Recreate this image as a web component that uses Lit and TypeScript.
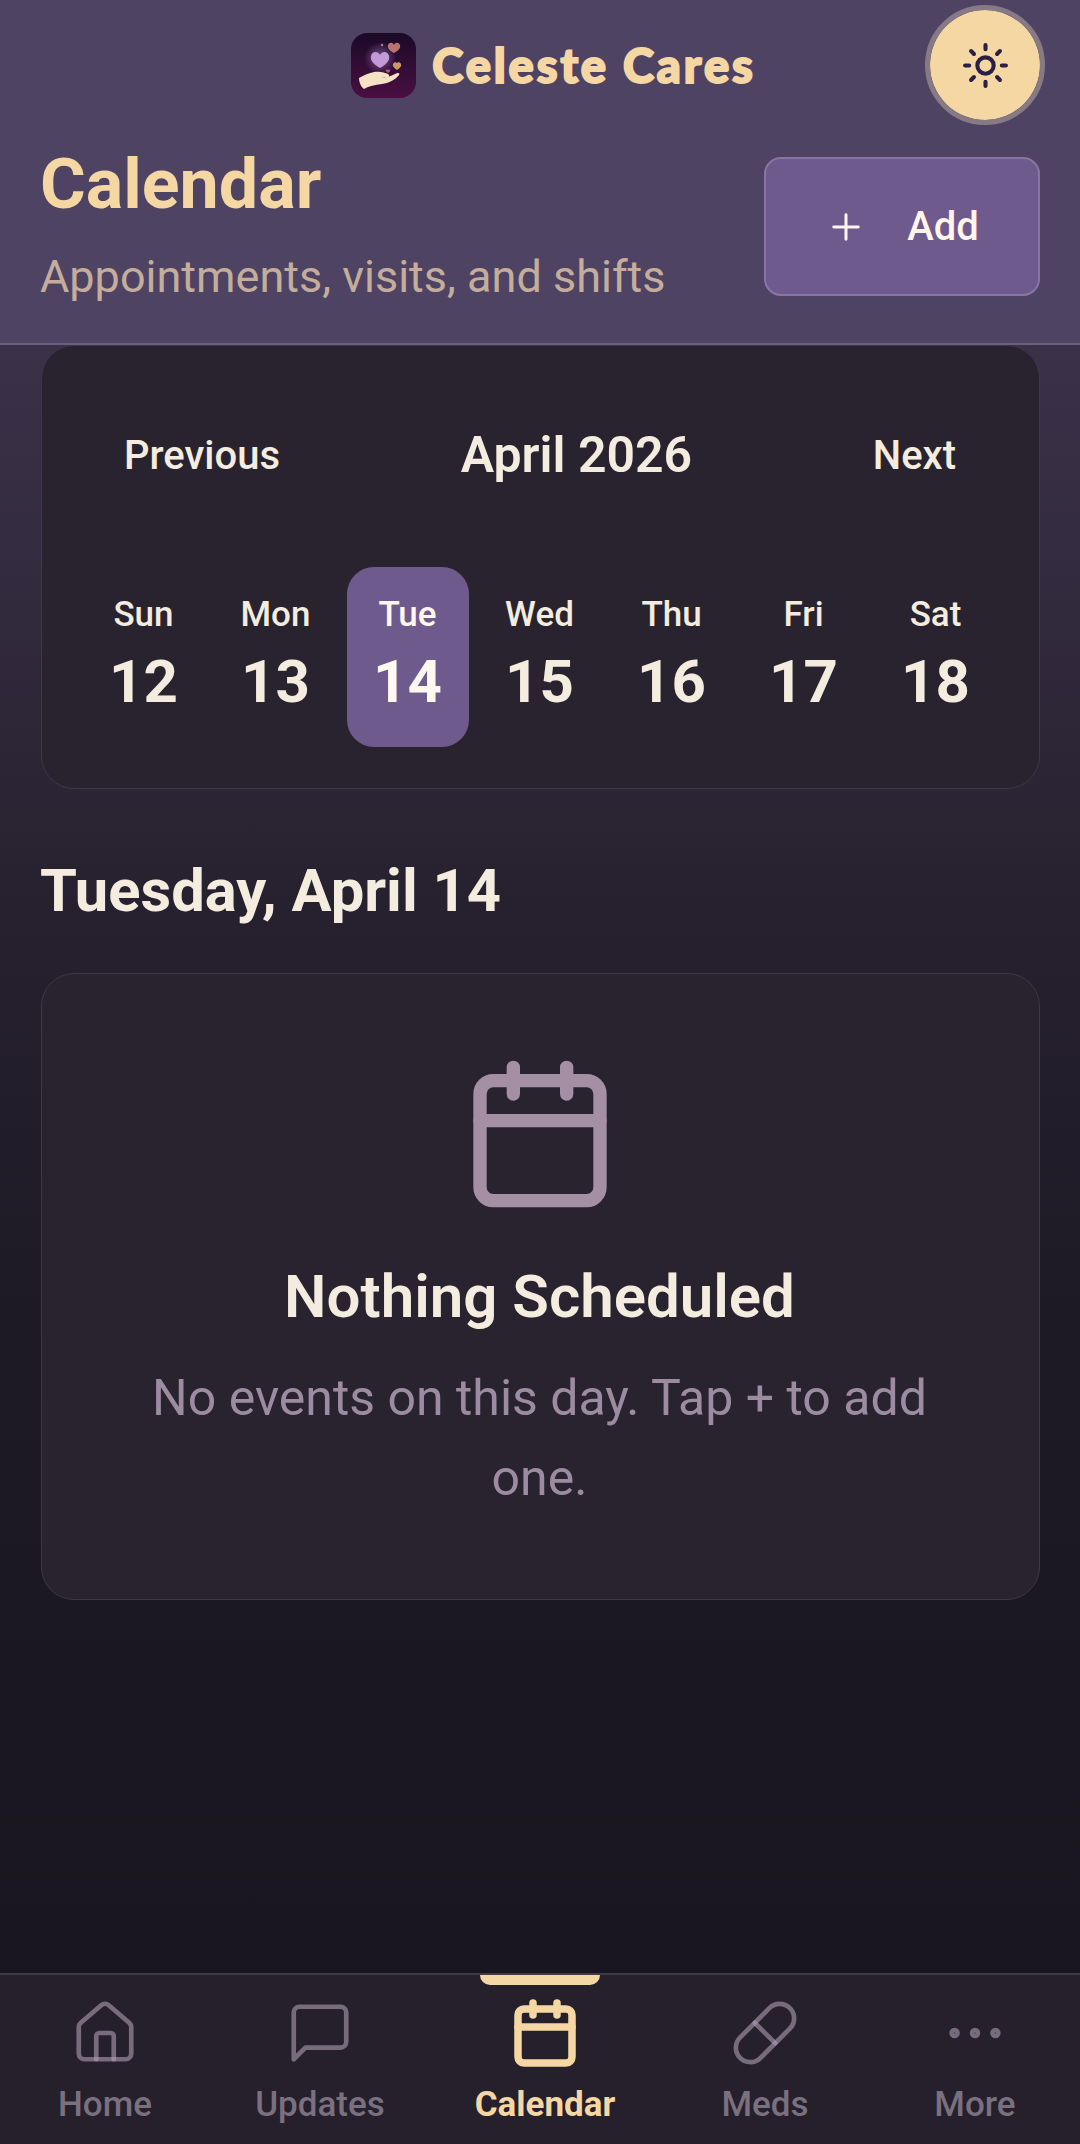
import { LitElement, html, css, svg } from "lit";
import { customElement } from "lit/decorators.js";

const days = [
  ["Sun", "12"], ["Mon", "13"], ["Tue", "14"], ["Wed", "15"], ["Thu", "16"], ["Fri", "17"], ["Sat", "18"],
];

const calIcon = svg`<rect x="3" y="4" width="18" height="18" rx="2"/><path d="M16 2v4M8 2v4M3 10h18"/>`;

const navItems = [
  { label: "Home", icon: svg`<path d="M15 21v-8a1 1 0 0 0-1-1h-4a1 1 0 0 0-1 1v8"/><path d="M3 10a2 2 0 0 1 .71-1.53l7-6a2 2 0 0 1 2.58 0l7 6A2 2 0 0 1 21 10v9a2 2 0 0 1-2 2H5a2 2 0 0 1-2-2z"/>` },
  { label: "Updates", icon: svg`<path d="M21 15a2 2 0 0 1-2 2H7l-4 4V5a2 2 0 0 1 2-2h14a2 2 0 0 1 2 2z"/>` },
  { label: "Calendar", icon: calIcon, active: true },
  { label: "Meds", icon: svg`<path d="m10.5 20.5 10-10a4.95 4.95 0 1 0-7-7l-10 10a4.95 4.95 0 1 0 7 7Z"/><path d="m8.5 8.5 7 7"/>` },
  { label: "More", icon: svg`<circle cx="12" cy="12" r="1"/><circle cx="19" cy="12" r="1"/><circle cx="5" cy="12" r="1"/>` },
];

@customElement("app-root")
export class AppRoot extends LitElement {
  static styles = css`
    :host {
      display: flex;
      flex-direction: column;
      height: 2144px;
      width: 1080px;
      overflow: hidden;
      font-family: Roboto, "Liberation Sans", sans-serif;
      color: #f3ecdf;
      background: linear-gradient(180deg, #4f4363 0%, #3a3148 17%, #27212f 42%, #1d1925 62%, #19151f 100%);
    }
    svg { display: block; }
    .head {
      flex: none;
      height: 345px;
      box-sizing: border-box;
      background: #4f4363;
      border-bottom: 2px solid #6a5f7c;
      display: flex;
      flex-direction: column;
    }
    .brandrow {
      height: 130px;
      flex: none;
      position: relative;
      display: flex;
      align-items: center;
      justify-content: center;
      gap: 16px;
      padding-left: 27px;
      box-sizing: border-box;
    }
    .logo { border-radius: 16px; }
    .brand {
      font-family: Lato, sans-serif;
      font-weight: 900;
      font-size: 47px;
      letter-spacing: 2.9px;
      color: #f5d7a3;
      line-height: 1;
      -webkit-text-stroke: 2px #f5d7a3;
      stroke-linejoin: round;
    }
    .theme {
      position: absolute;
      left: 925px;
      top: 5px;
      width: 120px;
      height: 120px;
      box-sizing: border-box;
      border-radius: 50%;
      background: #f5d7a3;
      border: 5px solid #877a84;
      background-clip: padding-box;
      display: flex;
      align-items: center;
      justify-content: center;
    }
    .titlerow {
      display: flex;
      justify-content: space-between;
      padding: 19px 40px 0 40px;
    }
    h1 {
      margin: 0;
      font-size: 70px;
      line-height: 70px;
      font-weight: 700;
      color: #f5d7a3;
    }
    .sub {
      margin-top: 32px;
      font-size: 45px;
      line-height: 52px;
      color: #c4ae9b;
    }
    .add {
      width: 276px;
      height: 139px;
      box-sizing: border-box;
      margin-top: 8px;
      background: #6f5a8e;
      border: 2px solid #8875a5;
      border-radius: 17px;
      display: flex;
      align-items: center;
      justify-content: center;
      gap: 40px;
      font-size: 40px;
      font-weight: 500;
      color: #fff5ea;
    }
    main {
      flex: 1;
      padding: 0 40px 0 41px;
      min-height: 0;
    }
    .card {
      background: #292330;
      border: 1.5px solid #3d3746;
      border-radius: 33px;
      box-sizing: border-box;
    }
    .calcard {
      height: 444px;
      padding: 0 40px 0 40.5px;
    }
    .month {
      display: flex;
      align-items: center;
      justify-content: space-between;
      height: 218px;
      padding: 0 0 0 41.5px;
      font-size: 40px;
      font-weight: 500;
    }
    .month b { font-size: 50px; font-weight: 600; }
    .month span:last-child { margin-right: 43px; }
    .week {
      display: grid;
      grid-template-columns: repeat(7, 122px);
      column-gap: 10px;
      margin-top: 3px;
    }
    .day {
      height: 180px;
      border-radius: 27px;
      display: flex;
      flex-direction: column;
      align-items: center;
      box-sizing: border-box;
      padding-top: 28px;
    }
    .day.sel { background: #6f5a8e; color: #fff8ef; }
    .dn { font-size: 35px; line-height: 39px; font-weight: 500; }
    .dd { font-size: 60px; line-height: 72px; font-weight: 700; margin-top: 12px; }
    h2 {
      margin: 0 0 0 -1px;
      padding-top: 67px;
      font-size: 59.7px;
      line-height: 70px;
      font-weight: 700;
    }
    .empty {
      margin-top: 47px;
      height: 627px;
      display: flex;
      flex-direction: column;
      align-items: center;
      padding: 80px 2px 0 0;
      text-align: center;
    }
    .empty h3 {
      margin: 48px 0 0;
      font-size: 60px;
      line-height: 70px;
      font-weight: 600;
    }
    .empty p {
      margin: 26px 0 0;
      width: 800px;
      font-size: 50px;
      line-height: 80px;
      color: #9d8ca1;
    }
    nav {
      flex: none;
      height: 171px;
      box-sizing: border-box;
      background: #25202b;
      border-top: 2px solid #3f3a48;
      display: grid;
      grid-template-columns: 210px 220px 230px 210px 210px;
    }
    .item {
      position: relative;
      display: flex;
      flex-direction: column;
      align-items: center;
      padding-top: 23px;
      color: #7b7080;
      font-size: 35px;
      font-weight: 500;
      line-height: 40px;
    }
    .item svg { width: 70px; height: 70px; stroke: #b09fb5; stroke-opacity: 0.6; stroke-width: 1.6; }
    .item span { margin-top: 17px; }
    .item.on { color: #f5d7a3; font-weight: 700; }
    .item.on svg { width: 72px; height: 72px; margin: -1px 0; stroke: #f5d7a3; stroke-opacity: 1; stroke-width: 2.5; }
    .bar {
      position: absolute;
      top: 0;
      left: 50px;
      width: 120px;
      height: 10px;
      background: #f5d7a3;
      border-radius: 0 0 10px 10px;
    }
  `;

  logo() {
    return html`<svg class="logo" width="65" height="65" viewBox="0 0 65 65">
      <defs>
        <linearGradient id="lg" x1="0" y1="0" x2="0" y2="1">
          <stop offset="0" stop-color="#1a0a28"/>
          <stop offset="1" stop-color="#4a0f42"/>
        </linearGradient>
        <radialGradient id="gl"><stop offset="0" stop-color="#b58ad8" stop-opacity=".55"/><stop offset="1" stop-color="#b58ad8" stop-opacity="0"/></radialGradient>
      </defs>
      <rect width="65" height="65" fill="url(#lg)"/>
      <circle cx="29" cy="25" r="16" fill="url(#gl)"/>
      <path d="M29 35c-7-4-10-8-9-12 1-5 7-5 9-1 2-4 8-4 9 1 1 4-2 8-9 12z" fill="#c39ad9"/>
      <path d="M43 20c-4-2-7-5-6-8 1-3 5-3 6 0 1-3 5-3 6 0 1 3-2 6-6 8z" fill="#b8736f"/>
      <path d="M46 37c-3-2-5-4-4-6 1-2 3-2 4-1 1-1 3-1 4 1 1 2-1 4-4 6z" fill="#c99a68"/>
      <path d="M37 40c-1-1-3-2-2-3 1-1 2 0 2 0s1-1 2 0c1 1-1 2-2 3z" fill="#a8606a"/>
      <circle cx="31" cy="12" r="1.2" fill="#a88"/>
      <path d="M8 45c5-3 10-5 15-6 5-1 12 1 14 2 2 1 1 3-1 3h-5c4 1 9-1 13-3 4-2 5-1 4 1-4 5-10 8-17 9-7 1-13 2-18 5-3-2-5-7-5-11z" fill="#f6e3c4"/>
    </svg>`;
  }

  render() {
    return html`
      <header class="head">
        <div class="brandrow">
          ${this.logo()}
          <span class="brand">Celeste Cares</span>
          <div class="theme">
            <svg width="49" height="49" viewBox="0 0 24 24" fill="none" stroke="#2a1f45" stroke-width="2" stroke-linecap="round" stroke-linejoin="round">
              <circle cx="12" cy="12" r="4"/>
              <path d="M12 2v2M12 20v2M4.93 4.93l1.41 1.41M17.66 17.66l1.41 1.41M2 12h2M20 12h2M6.34 17.66l-1.41 1.41M19.07 4.93l-1.41 1.41"/>
            </svg>
          </div>
        </div>
        <div class="titlerow">
          <div>
            <h1>Calendar</h1>
            <div class="sub">Appointments, visits, and shifts</div>
          </div>
          <div class="add">
            <svg width="42" height="42" viewBox="0 0 24 24" fill="none" stroke="#fff5ea" stroke-width="1.7" stroke-linecap="round"><path d="M5 12h14M12 5v14"/></svg>
            <span>Add</span>
          </div>
        </div>
      </header>
      <main>
        <section class="card calcard">
          <div class="month"><span>Previous</span><b>April 2026</b><span>Next</span></div>
          <div class="week">
            ${days.map(([n, d]) => html`<div class="day ${n === "Tue" ? "sel" : ""}"><div class="dn">${n}</div><div class="dd">${d}</div></div>`)}
          </div>
        </section>
        <h2>Tuesday, April 14</h2>
        <section class="card empty">
          <svg width="160" height="160" viewBox="0 0 24 24" fill="none" stroke="#a48fa5" stroke-width="2" stroke-linecap="round" stroke-linejoin="round">${calIcon}</svg>
          <h3>Nothing Scheduled</h3>
          <p>No events on this day. Tap + to add one.</p>
        </section>
      </main>
      <nav>
        ${navItems.map((it) => html`<div class="item ${it.active ? "on" : ""}">
          ${it.active ? html`<div class="bar"></div>` : ""}
          <svg viewBox="0 0 24 24" fill="none" stroke-linecap="round" stroke-linejoin="round">${it.icon}</svg>
          <span>${it.label}</span>
        </div>`)}
      </nav>
    `;
  }
}
